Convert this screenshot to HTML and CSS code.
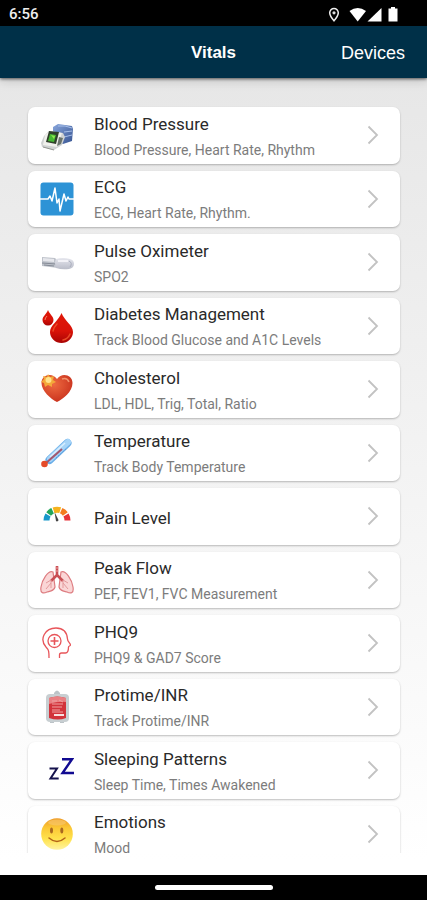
FILE: index.html
```html
<!DOCTYPE html>
<html lang="en">
<head>
<meta charset="utf-8">
<meta name="viewport" content="width=device-width, initial-scale=1">
<title>Vitals</title>
<link rel="stylesheet" href="styles.css">
</head>
<body>
<svg class="defs" aria-hidden="true">
  <defs>
    <linearGradient id="blood" x1="0" y1="0" x2="0" y2="1"><stop offset="0" stop-color="#e01808"/><stop offset=".6" stop-color="#d91208"/><stop offset="1" stop-color="#a80404"/></linearGradient>
    <radialGradient id="heart" cx=".4" cy=".35" r=".7"><stop offset="0" stop-color="#ee6a40"/><stop offset="1" stop-color="#c8301c"/></radialGradient>
    <linearGradient id="face" x1="0" y1="0" x2="0" y2="1"><stop offset="0" stop-color="#ee9a26"/><stop offset=".3" stop-color="#fbc735"/><stop offset=".65" stop-color="#ffe24c"/><stop offset="1" stop-color="#fff3a0"/></linearGradient>
    <linearGradient id="cuff" x1="0" y1="0" x2="1" y2="1"><stop offset="0" stop-color="#88a6dc"/><stop offset="1" stop-color="#365391"/></linearGradient>
    <linearGradient id="clip" x1="0" y1="0" x2="0" y2="1"><stop offset="0" stop-color="#e6e7ee"/><stop offset="1" stop-color="#b9bcc8"/></linearGradient>
    <symbol id="chevron" viewBox="0 0 12 20"><path d="M1.500 1.500 10 10 1.500 18.500" fill="none" stroke="#c2c2c2" stroke-width="1.800"/></symbol>
  </defs>
</svg>

<div class="status">
  <span>6:56</span>
  <svg width="72" height="18" viewBox="0 0 72 18" aria-hidden="true">
    <path d="M7 1.500a4.300 4.300 0 0 0-4.300 4.300c0 3.100 4.300 8 4.300 8s4.300-4.900 4.300-8A4.300 4.300 0 0 0 7 1.500Z" fill="none" stroke="#eee" stroke-width="1.500"/>
    <circle cx="7" cy="5.800" r="1.600" fill="#ddd"/>
    <path d="M22.500 4Q30.700-1.800 39 4L30.700 14.500Z" fill="#fff"/>
    <path d="M54.500 1V14.500H40.500Z" fill="#fff"/>
    <path d="M64 0h4v1.500h2.500v13h-9v-13H64Z" fill="#fff"/>
  </svg>
</div>

<header class="bar">
  <h1>Vitals</h1>
  <a class="devices" href="#devices">Devices</a>
</header>

<main class="screen">
  <ul class="list">
    <li><a class="card" href="#blood-pressure">
      <svg class="icon" viewBox="0 0 34 34" aria-hidden="true">
        <path d="M13 9 18 6l14 2 1 3-1 12-9 3-10-4Z" fill="url(#cuff)"/><path d="M18 8q7-1 14 2M24 14l8-1M24 19l8-2" stroke="#a8c0ea" fill="none"/>
        <path d="M4 18 9 13l14 2 2 4-3 8-8 5-12-3-1-4Z" fill="#cfd2d2"/><path d="m5 17 5-4 12 2-5 14-14-2Z" fill="#f0f0ec"/>
        <path d="m9 13 10 1-3 12-10-2Z" fill="#30402c"/><path d="m10 16 6 1-2 7-6-1Z" fill="#45b832"/><path d="m11 17 3 4 1-3" fill="#92e850"/><path d="m19 19 4 1-2 6-4 2" fill="#6a746c"/><path d="m3 29 11 3" stroke="#92958f"/>
      </svg>
      <span class="text"><span class="name">Blood Pressure</span><span class="note">Blood Pressure, Heart Rate, Rhythm</span></span>
      <svg class="go" aria-hidden="true"><use href="#chevron"/></svg></a></li>
    <li><a class="card" href="#ecg">
      <svg class="icon" viewBox="0 0 34 34" aria-hidden="true">
        <rect x=".5" y=".5" width="33" height="33" rx="3" fill="#2d93d6"/>
        <path d="M0 17h8l2-3 2 5 3-13 2 15 2-4 1 12 4-17 2 7 2-4 1 2h5" fill="none" stroke="#fff" stroke-width="1.500" stroke-linejoin="round"/>
      </svg>
      <span class="text"><span class="name">ECG</span><span class="note">ECG, Heart Rate, Rhythm.</span></span>
      <svg class="go" aria-hidden="true"><use href="#chevron"/></svg></a></li>
    <li><a class="card" href="#pulse-oximeter">
      <svg class="icon" viewBox="0 0 34 34" aria-hidden="true">
        <path d="m2 12 13 1 3 3v7L2 21Z" fill="#bec2ca"/><path d="m3 13 11 1v3L3 16Z" fill="#e6e7ec"/><path d="m2 18 14 1M4 20l10 1" stroke="#858b96"/>
        <path d="M16 14q7-2 14 0 4 1 4 5t-5 5q-7 1-13-1-2-5 0-9Z" fill="url(#clip)"/><path d="M18 16h10" stroke="#f2f2f7" stroke-width="2"/><path d="M29 16q4 2 1 6" fill="none" stroke="#a9adbd"/>
      </svg>
      <span class="text"><span class="name">Pulse Oximeter</span><span class="note">SPO2</span></span>
      <svg class="go" aria-hidden="true"><use href="#chevron"/></svg></a></li>
    <li><a class="card" href="#diabetes">
      <svg class="icon" viewBox="0 0 34 34" aria-hidden="true">
        <path d="M8 1c2 5 5.500 6 5.500 10a5.500 5.500 0 0 1-11 0C2.500 7 6 6 8 1Z" fill="url(#blood)"/>
        <path d="M21.500 4c3 8 11.500 12 11.500 19a11.500 11 0 0 1-23 0c0-7 8.500-11 11.500-19Z" fill="url(#blood)"/>
        <path d="M13 22q1-4 4-7M30 25q-2 5-7 6" fill="none" stroke="#ea4a26" stroke-width="1.500" stroke-linecap="round"/><path d="M5 11q0-2 2-4" fill="none" stroke="#f18468"/>
      </svg>
      <span class="text"><span class="name">Diabetes Management</span><span class="note">Track Blood Glucose and A1C Levels</span></span>
      <svg class="go" aria-hidden="true"><use href="#chevron"/></svg></a></li>
    <li><a class="card" href="#cholesterol">
      <svg class="icon" viewBox="0 0 34 34" aria-hidden="true">
        <path d="M17 30C11 27 1.500 19 1.500 11 1.500 3 12 0 17 7c5-7 15.500-4 15.500 4C32.500 20 23 27 17 30Z" fill="url(#heart)"/>
        <path d="m8 2 2 3 4-1-1 4 3 2-4 2v3l-4-2-3 2-1-4-3-1 3-3-1-3 4 1Z" fill="#f4a93a"/><circle cx="8.500" cy="8" r="3" fill="#ffe38c"/><path d="M22 7q5-2 7 3" fill="none" stroke="#f2926c" stroke-width="1.500"/>
      </svg>
      <span class="text"><span class="name">Cholesterol</span><span class="note">LDL, HDL, Trig, Total, Ratio</span></span>
      <svg class="go" aria-hidden="true"><use href="#chevron"/></svg></a></li>
    <li><a class="card" href="#temperature">
      <svg class="icon" viewBox="0 0 34 34" aria-hidden="true">
        <path d="M9.500 24 27.500 7" stroke="#6aaee8" stroke-width="8" stroke-linecap="round"/><path d="M10 23 28 6" stroke="#a6d4f8" stroke-width="6" stroke-linecap="round"/>
        <path d="M10 21 25 7" stroke="#d9efff" stroke-width="1.500"/><path d="M6 27 22 13" stroke="#a3576d" stroke-width="2"/><path d="m16 22 10-9" stroke="#568ed1" stroke-dasharray="1 2"/><circle cx="4.500" cy="28" r="3.300" fill="#e54b29"/>
      </svg>
      <span class="text"><span class="name">Temperature</span><span class="note">Track Body Temperature</span></span>
      <svg class="go" aria-hidden="true"><use href="#chevron"/></svg></a></li>
    <li><a class="card" href="#pain-level">
      <svg class="icon" viewBox="0 0 34 34" aria-hidden="true">
        <g fill="none" stroke-width="6"><path d="M6.500 21.500A10.500 10.500 0 0 1 8 16" stroke="#1697ca"/><path d="M8.600 15A10.500 10.500 0 0 1 12.600 11.800" stroke="#22a65a"/><path d="M13.600 11.300A10.500 10.500 0 0 1 20.200 11.200" stroke="#f5b21d"/><path d="M21.200 11.600A10.500 10.500 0 0 1 25.300 15" stroke="#f47c20"/><path d="M26 16A10.500 10.500 0 0 1 27.500 21.500" stroke="#e73338"/></g>
        <path d="m14.500 13 4 8a1.500 1.500 0 0 1-2.500 1Z" fill="#444"/>
      </svg>
      <span class="text"><span class="name">Pain Level</span></span>
      <svg class="go" aria-hidden="true"><use href="#chevron"/></svg></a></li>
    <li><a class="card" href="#peak-flow">
      <svg class="icon" viewBox="0 0 34 34" aria-hidden="true">
        <g fill="#fad6d6" stroke="#dd7c80" stroke-width="1.200"><path d="M13 9c-5-2-11 8-12 15-1 6 2 7 6 5 4-1 7-1 8-5Z"/><path d="M21 9c5-2 11 8 12 15 1 6-2 7-6 5-4-1-7-1-8-5Z"/></g>
        <path d="M17 3v10M17 12l-6 6M17 12l6 6" fill="none" stroke="#c94f54" stroke-width="2.600"/><path d="M11 17l-5 3M11 17v8M11 20l-5 6M23 17l5 3M23 17v8M23 20l5 6" fill="none" stroke="#e39a9c"/><path d="M15.500 5h3M15.500 8h3" stroke="#efa3a3"/>
      </svg>
      <span class="text"><span class="name">Peak Flow</span><span class="note">PEF, FEV1, FVC Measurement</span></span>
      <svg class="go" aria-hidden="true"><use href="#chevron"/></svg></a></li>
    <li><a class="card" href="#phq9">
      <svg class="icon" viewBox="0 0 34 34" aria-hidden="true">
        <g fill="none" stroke="#e8555a" stroke-width="1.300" stroke-linejoin="round"><path d="M9 32c0-6 0-8-3-11C-1 13 5 2 16 2c8 0 11 5 11.500 11 0 3 3 4 3 6 0 1-2 1-2 2 0 3 0 6-3 6h-4q-2 0-2 2v3"/><circle cx="14.500" cy="15" r="6.500"/><path d="M10.500 15h8M14.500 11v8" stroke-width="1.600"/></g>
      </svg>
      <span class="text"><span class="name">PHQ9</span><span class="note">PHQ9 &amp; GAD7 Score</span></span>
      <svg class="go" aria-hidden="true"><use href="#chevron"/></svg></a></li>
    <li><a class="card" href="#protime">
      <svg class="icon" viewBox="0 0 34 34" aria-hidden="true">
        <path d="M14 3q3-5 6 0v3h-6ZM10 29h4v4h-4ZM20 29h4v4h-4Z" fill="#bcc3c7"/><rect x="6" y="4" width="23" height="28" rx="4" fill="#c8cfd2"/>
        <path d="M9 8q8-3 17 0v20q-8 3-17 0Z" fill="#d2333b"/><path d="M9 8q8-3 17 0v4q-7-1-17 2Z" fill="#e98083"/>
        <path d="M12 11h5M19 10l4 2M12 14h11M12 17h10M12 20h8M12 22h11" stroke="#f0a2a2"/><path d="M14 25h10" stroke="#f8dfdf" stroke-width="2"/>
      </svg>
      <span class="text"><span class="name">Protime/INR</span><span class="note">Track Protime/INR</span></span>
      <svg class="go" aria-hidden="true"><use href="#chevron"/></svg></a></li>
    <li><a class="card" href="#sleep">
      <svg class="icon" viewBox="0 0 34 34" aria-hidden="true">
        <path d="M9.500 15.500h7.500L10.500 25.500h8.200" fill="none" stroke="#15124c" stroke-width="2"/><path d="M22 6.300h10L22.500 20h11.500" fill="none" stroke="#110a91" stroke-width="2.400"/>
      </svg>
      <span class="text"><span class="name">Sleeping Patterns</span><span class="note">Sleep Time, Times Awakened</span></span>
      <svg class="go" aria-hidden="true"><use href="#chevron"/></svg></a></li>
    <li><a class="card" href="#emotions">
      <svg class="icon" viewBox="0 0 34 34" aria-hidden="true">
        <circle cx="17" cy="17" r="15.800" fill="url(#face)"/><ellipse cx="17" cy="5.500" rx="9" ry="3" fill="#f8ca71" opacity=".6"/><ellipse cx="11.500" cy="13.500" rx="1.500" ry="3" fill="#a9681f"/><ellipse cx="21.800" cy="13.500" rx="1.500" ry="3" fill="#a9681f"/><path d="M9 21q8 7 16 0" fill="none" stroke="#b26319" stroke-width="1.500" stroke-linecap="round"/>
      </svg>
      <span class="text"><span class="name">Emotions</span><span class="note">Mood</span></span>
      <svg class="go" aria-hidden="true"><use href="#chevron"/></svg></a></li>
  </ul>
</main>

<footer class="nav"><span class="handle"></span></footer>
</body>
</html>
```
FILE: styles.css
```css
* { box-sizing: border-box; }

body {
  margin: 0;
  height: 100vh;
  display: flex;
  flex-direction: column;
  overflow: hidden;
  font-family: Roboto, "Liberation Sans", sans-serif;
  background: linear-gradient(#e7e7e7 80px, #fff 860px);
}

.defs {
  position: absolute;
  width: 0;
  height: 0;
}

.status {
  flex: none;
  height: 26px;
  padding: 2px 28px 0 9px;
  display: flex;
  align-items: center;
  justify-content: space-between;
  background: #000;
  color: #eee;
  font-size: 15px;
  font-weight: 500;
}

.status svg { margin-top: 4px; }

.bar {
  flex: none;
  height: 52px;
  padding: 2px 22px 0;
  display: grid;
  grid-template-columns: 1fr auto 1fr;
  align-items: center;
  background: #003048;
  color: #fff;
  font-family: "Liberation Sans", Arial, sans-serif;
  box-shadow: 0 1px 3px rgba(0, 0, 0, 0.6), 0 3px 10px rgba(0, 0, 0, 0.15);
}

.bar h1 {
  grid-column: 2;
  margin: 0;
  font-size: 17px;
  line-height: 24px;
  font-weight: 700;
}

.devices {
  justify-self: end;
  color: #fff;
  font-size: 18px;
  line-height: 24px;
  text-decoration: none;
}

.screen {
  flex: 1;
  min-height: 0;
  margin-bottom: 22px;
  padding: 29px 27px 0 28px;
  overflow: hidden;
}

.list {
  min-height: 755px;
  margin: 0;
  padding: 0;
  list-style: none;
  display: grid;
  grid-auto-rows: 1fr;
  gap: 7px;
}

.card {
  height: 100%;
  padding: 0 21px 0 12px;
  display: flex;
  align-items: center;
  border-radius: 7px;
  background: #fff;
  box-shadow: 0 1px 2px rgba(0, 0, 0, 0.25);
  text-decoration: none;
}

.icon {
  flex: none;
  width: 34px;
  height: 34px;
}

.text {
  flex: 1;
  margin-left: 20px;
  padding-top: 3px;
  display: flex;
  flex-direction: column;
}

.name {
  color: #2a2a2a;
  font-size: 17px;
  line-height: 26px;
}

.note {
  color: #7c7c7c;
  font-size: 14px;
  line-height: 26px;
}

.go {
  flex: none;
  width: 12px;
  height: 20px;
}

.nav {
  flex: none;
  height: 25px;
  display: flex;
  align-items: center;
  justify-content: center;
  background: #000;
}

.handle {
  width: 118px;
  height: 5px;
  border-radius: 3px;
  background: #fff;
}
```
